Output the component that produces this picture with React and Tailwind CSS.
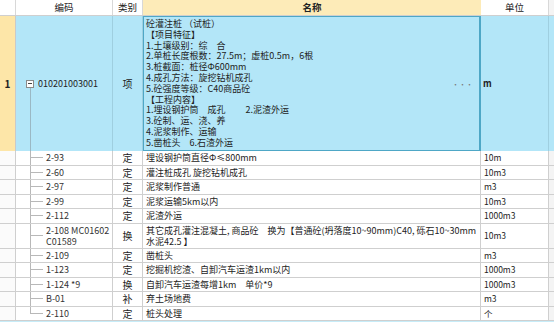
import React from 'react';

const font = { fontFamily: '"Noto Sans CJK SC", "Liberation Sans", sans-serif' };

const spec = [
    '砼灌注桩 （试桩）',
    '【项目特征】',
    '1.土壤级别：综　合',
    '2.单桩长度根数：27.5m；虚桩0.5m，6根',
    '3.桩截面：桩径Φ600mm',
    '4.成孔方法：旋挖钻机成孔',
    '5.砼强度等级：C40商品砼',
    '【工程内容】',
    '1.埋设钢护筒　成孔　　 2.泥渣外运',
    '3.砼制、运、浇、养',
    '4.泥浆制作、运输',
    '5.凿桩头　6.石渣外运'
];

const items = [
    { code: ['2-93'], type: '定', name: ['埋设钢护筒直径Φ≤800mm'], unit: '10m' },
    { code: ['2-60'], type: '定', name: ['灌注桩成孔 旋挖钻机成孔'], unit: '10m3' },
    { code: ['2-97'], type: '定', name: ['泥浆制作普通'], unit: 'm3' },
    { code: ['2-99'], type: '定', name: ['泥浆运输5km以内'], unit: '10m3' },
    { code: ['2-112'], type: '定', name: ['泥渣外运'], unit: '1000m3' },
    {
        code: ['2-108 MC01602', 'C01589'],
        type: '换',
        name: ['其它成孔灌注混凝土, 商品砼　换为【普通砼(坍落度10~90mm)C40, 砾石10~30mm', '水泥42.5 】'],
        unit: '10m3'
    },
    { code: ['2-109'], type: '定', name: ['凿桩头'], unit: 'm3' },
    { code: ['1-123'], type: '定', name: ['挖掘机挖渣、自卸汽车运渣1km以内'], unit: '1000m3' },
    { code: ['1-124 *9'], type: '换', name: ['自卸汽车运渣每增1km　单价*9'], unit: '1000m3' },
    { code: ['B-01'], type: '补', name: ['弃土场地费'], unit: 'm3' },
    { code: ['2-110'], type: '定', name: ['桩头处理'], unit: '个' }
];

const SubRow = ({ item, last }) => {
    const tall = item.code.length > 1;
    return (
        <div className={`flex border-b border-[#cfcfcf] bg-white ${tall ? 'h-[25px]' : 'h-[14.5px]'}`}>
            <div className="w-[16px] shrink-0 border-r border-[#cfcfcf] bg-[#fbfbfb]" />
            {/* code + tree line */}
            <div className="w-[97px] shrink-0 flex border-r border-[#cfcfcf] pl-[14px]">
                <div className="w-[13px] shrink-0 flex flex-col">
                    <div className="flex-1 border-l border-b border-[#b8b8b8]" />
                    <div className={`flex-1 ${last ? '' : 'border-l border-[#b8b8b8]'}`} />
                </div>
                <div className="pl-[3px] flex flex-col justify-center text-[9px] leading-[11px] text-[#333] whitespace-nowrap">
                    {item.code.map((c, i) => <div key={i}>{c}</div>)}
                </div>
            </div>
            <div className="w-[30px] shrink-0 flex items-center justify-center border-r border-[#cfcfcf] text-[10px] text-[#222]">
                {item.type}
            </div>
            <div className="w-[338px] shrink-0 flex flex-col justify-center pl-[3px] border-r border-[#cfcfcf] text-[9px] leading-[11px] text-[#222] whitespace-nowrap overflow-hidden">
                {item.name.map((n, i) => <div key={i}>{n}</div>)}
            </div>
            <div className="w-[68px] shrink-0 flex items-center pl-[3px] border-r border-[#cfcfcf] text-[8.5px] text-[#222]">
                {item.unit}
            </div>
            <div className="flex-1 bg-[#f4f4f4]" />
        </div>
    );
};

const App = () => {
    return (
        <div className="w-[554px] h-[322px] overflow-hidden bg-white select-none" style={font}>
            {/* header */}
            <div className="flex h-[16px] border-b border-[#cfcfcf] text-[9.5px] text-[#222]">
                <div className="w-[16px] shrink-0 border-r border-[#d8d8d8]" />
                <div className="w-[97px] shrink-0 flex items-center justify-center border-r border-[#d8d8d8]">编码</div>
                <div className="w-[30px] shrink-0 flex items-center justify-center border-r border-[#d8d8d8]">类别</div>
                <div className="w-[338px] shrink-0 flex items-center justify-center bg-[#fdebb8] font-bold">名称</div>
                <div className="w-[68px] shrink-0 flex items-center justify-center border-r border-[#d8d8d8]">单位</div>
                <div className="flex-1 bg-[#f4f4f4]" />
            </div>

            {/* main item */}
            <div className="flex h-[135px] bg-[#b3e6f8] text-[#222]">
                <div className="w-[16px] shrink-0 flex items-center justify-center bg-[#fde6a8] border-r border-[#c9c9c9] text-[10px] font-bold">1</div>
                <div className="w-[97px] shrink-0 flex items-stretch pl-[10px] border-r border-[#9fcfe0]">
                    <div className="w-[8px] shrink-0 flex flex-col">
                        <div className="flex-1" />
                        <div className="h-[8px] border border-[#8a8a8a] bg-white flex items-center justify-center">
                            <div className="w-[4px] h-px bg-[#444]" />
                        </div>
                        <div className="flex-1 ml-[3.5px] border-l border-[#9ab8c4]" />
                    </div>
                    <div className="pl-[4px] flex items-center text-[9px]">010201003001</div>
                </div>
                <div className="w-[30px] shrink-0 flex items-center justify-center border-r border-[#9fcfe0] text-[10px]">项</div>
                <div className="w-[338px] shrink-0 flex border border-[#4ea7c6] border-r-2 pt-[2px] pl-[2px]">
                    <div className="flex-1 text-[9px] leading-[10.8px] whitespace-pre">
                        {spec.map((l, i) => <div key={i}>{l}</div>)}
                    </div>
                    <div className="self-center pr-[6px] text-[7px] text-[#777]">···</div>
                </div>
                <div className="w-[68px] shrink-0 flex items-center pl-[2px] border-r border-[#9fcfe0] text-[9px] font-bold">m</div>
                <div className="flex-1 bg-[#b3e6f8]" />
            </div>

            {items.map((it, i) => (
                <SubRow key={i} item={it} last={i === items.length - 1} />
            ))}

            <div className="h-[14px] bg-[#c7ecf8]" />
        </div>
    );
};

export default App;
